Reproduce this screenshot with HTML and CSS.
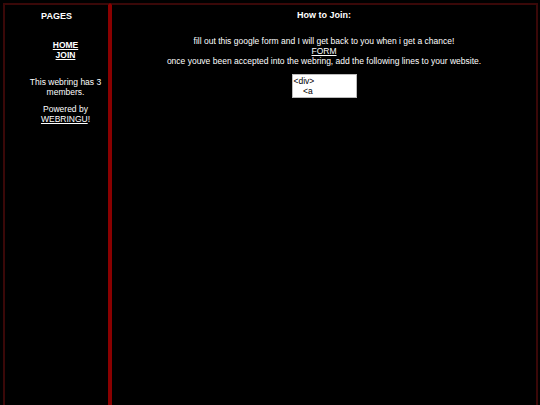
FILE: index.html
```html
<!DOCTYPE html>
<html>
<head>
<meta charset="utf-8">
<link rel="stylesheet" href="styles.css">
</head>
<body>
<div class="page">
  <div class="sidebar">
    <div class="title">PAGES</div>
    <div class="links">
      <div class="nav">
        <a href="#">HOME</a>
        <a href="#">JOIN</a>
      </div>
      <p class="members">This webring has 3 members.</p>
      <p class="powered">Powered by <a href="#">WEBRINGU</a>!</p>
    </div>
  </div>
  <div class="main">
    <div class="title">How to Join:</div>
    <div class="intro">
      <div>fill out this google form and I will get back to you when i get a chance!</div>
      <div><a href="#">FORM</a></div>
      <div>once youve been accepted into the webring, add the following lines to your website.</div>
    </div>
    <div class="code">&lt;div&gt;
    &lt;a href="https://webringu.neocities.org/"&gt;</div>
  </div>
</div>
</body>
</html>
```
FILE: styles.css
```css
html, body {
  margin: 0;
  padding: 0;
  background: #000;
}
body {
  font-family: "Liberation Sans", Arial, sans-serif;
  font-size: 8.5px;
  line-height: 10px;
  color: #fff;
}
.page {
  display: flex;
  height: 405px;
  box-sizing: border-box;
  padding: 3px 2px 0 3px;
}
.sidebar {
  width: 103px;
  flex: none;
  box-sizing: content-box;
  border-top: 2px solid #3a0808;
  border-left: 2px solid #3a0808;
  border-right: 2px solid #8a0000;
  text-align: center;
  padding-top: 6px;
}
.main {
  flex: 1;
  border-top: 2px solid #3a0808;
  border-left: 2px solid #8a0000;
  border-right: 2px solid #3a0808;
  text-align: center;
  padding-top: 5px;
}
.title {
  font-size: 9px;
  font-weight: bold;
}
a {
  color: #fff;
}
.links {
  margin: 0 2px 0 20px;
}
.nav {
  margin-top: 19px;
  display: flex;
  flex-direction: column;
  align-items: center;
}
.nav a {
  font-weight: bold;
}
.members {
  margin: 17px 0 0;
}
.powered {
  margin: 8px 0 0;
  line-height: 9.5px;
}
.intro {
  margin-top: 16px;
}
.code {
  width: 65px;
  height: 24px;
  margin: 8px auto 0;
  background: #fff;
  color: #000;
  border: 1px solid #bbb;
  text-align: left;
  white-space: pre-wrap;
  overflow-wrap: anywhere;
  overflow: hidden;
  padding: 1px 0 0 1px;
  box-sizing: border-box;
}
```
